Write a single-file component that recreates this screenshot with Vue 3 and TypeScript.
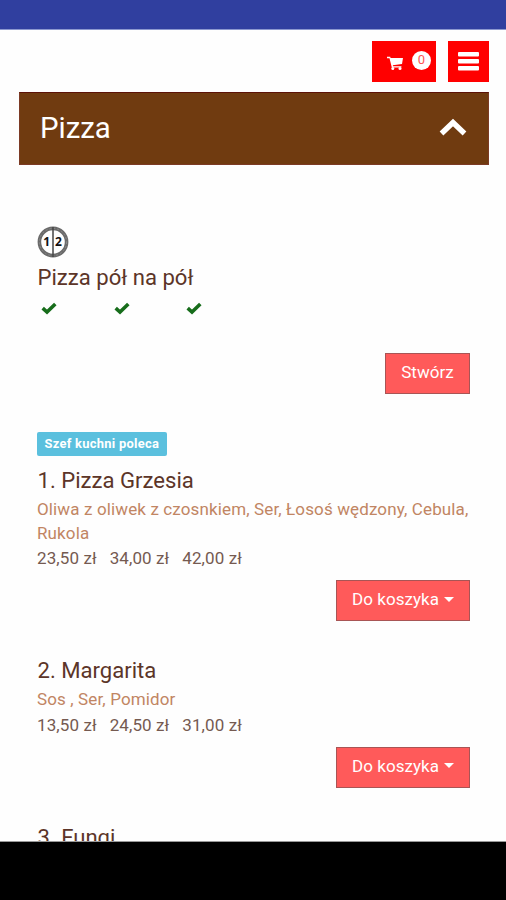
<script setup lang="ts">
interface Pizza {
  name: string
  badge?: string
  ingredients?: string
  prices?: string[]
}

const pizzas: Pizza[] = [
  {
    name: '1. Pizza Grzesia',
    badge: 'Szef kuchni poleca',
    ingredients: 'Oliwa z oliwek z czosnkiem, Ser, Łosoś wędzony, Cebula, Rukola',
    prices: ['23,50 zł', '34,00 zł', '42,00 zł'],
  },
  {
    name: '2. Margarita',
    ingredients: 'Sos , Ser, Pomidor',
    prices: ['13,50 zł', '24,50 zł', '31,00 zł'],
  },
  { name: '3. Fungi' },
]
</script>

<template>
  <div class="screen">
    <div class="status-bar"></div>
    <main class="content">
      <nav class="toolbar">
        <button class="tool cart" aria-label="Koszyk">
          <svg class="cart-icon" viewBox="0 0 16 14">
            <path d="M0 .8h3.2l.4 1.3H16l-1 6-9.2 1.2.3 1H14.4v1.3H4.8L2.5 2.2H0z" />
            <circle cx="5.8" cy="12.4" r="1.5" />
            <circle cx="13" cy="12.4" r="1.5" />
          </svg>
          <span class="count">0</span>
        </button>
        <button class="tool menu" aria-label="Menu">
          <svg viewBox="0 0 21 19" width="21" height="19">
            <rect width="21" height="4.6" rx="1" />
            <rect y="7" width="21" height="4.6" rx="1" />
            <rect y="14" width="21" height="4.6" rx="1" />
          </svg>
        </button>
      </nav>

      <header class="category">
        <h1>Pizza</h1>
        <svg viewBox="0 0 28 19" width="28" height="19">
          <path d="M2.5 15.5 14 4.5 25.5 15.5" />
        </svg>
      </header>

      <section class="item half">
        <svg class="half-icon" viewBox="0 0 32 32" width="32" height="32">
          <circle cx="16" cy="16" r="13.6" fill="none" stroke="#6a6a6a" stroke-width="3.6" />
          <circle cx="16" cy="16" r="13.6" fill="none" stroke="#8c8c8c" stroke-width="1" stroke-dasharray="2 2" />
          <path d="M16 1v30" stroke="#444" stroke-width="1.5" />
          <text x="6.3" y="20">1</text>
          <text x="18" y="20">2</text>
        </svg>
        <h2>Pizza pół na pół</h2>
        <div class="checks">
          <svg v-for="n in 3" :key="n" viewBox="0 0 16 13" width="16" height="13">
            <path d="M1.7 6.1 6 10 14.3 2" />
          </svg>
        </div>
        <button class="action create">Stwórz</button>
      </section>

      <section v-for="pizza in pizzas" :key="pizza.name" class="item">
        <span v-if="pizza.badge" class="badge">{{ pizza.badge }}</span>
        <h2>{{ pizza.name }}</h2>
        <template v-if="pizza.prices">
          <p class="ingredients">{{ pizza.ingredients }}</p>
          <div class="prices">
            <span v-for="price in pizza.prices" :key="price">{{ price }}</span>
          </div>
          <button class="action">Do koszyka<i class="caret"></i></button>
        </template>
      </section>
    </main>
    <div class="nav-bar"></div>
  </div>
</template>

<style>
body {
  margin: 0;
  background: #fff;
}
</style>

<style scoped>
.screen {
  display: flex;
  flex-direction: column;
  height: 900px;
  overflow: hidden;
  font-family: Roboto, "Liberation Sans", sans-serif;
  color: #5c3528;
}
.screen * {
  box-sizing: border-box;
}
.status-bar {
  flex: none;
  height: 30px;
  background: #303f9f;
  border-bottom: 1px solid #8c98cf;
}
.content {
  flex: none;
  height: 812px;
  overflow: hidden;
  background: #fefefe;
  border-bottom: 1px solid #999;
}
.nav-bar {
  flex: 1;
  background: #000;
}
.toolbar {
  display: flex;
  justify-content: flex-end;
  gap: 12px;
  padding: 11px 17px 0 0;
}
button {
  display: flex;
  align-items: center;
  margin: 0;
  border: 0;
  font-family: inherit;
  color: #fff;
}
.tool {
  height: 41px;
  padding: 0;
  background: #f00;
  fill: #fff;
}
.cart {
  width: 64px;
  padding: 0 5px 0 15px;
  justify-content: space-between;
}
.cart-icon {
  width: 16px;
  height: 14px;
  margin-top: 2px;
}
.count {
  width: 19px;
  height: 19px;
  margin-top: -2px;
  border-radius: 50%;
  background: #fff;
  color: #f55;
  font-size: 13px;
  line-height: 18px;
  text-align: center;
}
.menu {
  width: 41px;
  justify-content: center;
}
.category {
  display: flex;
  justify-content: space-between;
  align-items: center;
  height: 73px;
  margin: 10px 17px 0 19px;
  padding: 0 21px 2px 20px;
  border: 1px solid #7c3b25;
  border-top-color: #5c1208;
  background: #703b10;
  color: #fff;
}
h1 {
  margin: 0;
  font-size: 29.4px;
  font-weight: 400;
  line-height: 36px;
}
.category path {
  fill: none;
  stroke: #fff;
  stroke-width: 5.4;
}
.item {
  display: flex;
  flex-direction: column;
  align-items: flex-start;
  margin: 0 36px 35px 37px;
}
.half {
  margin-top: 61px;
  margin-bottom: 38px;
}
.half-icon text {
  font: 700 12px "Open Sans", sans-serif;
  fill: #111;
}
h2 {
  margin: 0;
  padding-left: 0.5px;
  font-size: 22.1px;
  font-weight: 400;
  line-height: 28px;
}
.half h2 {
  margin-top: 5px;
}
.checks {
  display: flex;
  gap: 56.5px;
  height: 13px;
  margin: 11px 0 0 4px;
}
.checks path {
  fill: none;
  stroke: #176d1b;
  stroke-width: 3.6;
}
.badge {
  height: 24px;
  margin-bottom: 10px;
  padding: 0 7.5px;
  border-radius: 2px;
  background: #5bc0de;
  color: #fff;
  font-size: 12.9px;
  font-weight: 700;
  letter-spacing: 0.28px;
  line-height: 23px;
}
.ingredients {
  margin: 4px 0 0;
  color: #c18563;
  font-size: 17px;
  letter-spacing: 0.13px;
  line-height: 23.5px;
}
.prices {
  display: flex;
  gap: 13px;
  margin-top: 1px;
  color: #755a51;
  font-size: 17px;
  letter-spacing: 0.1px;
  line-height: 24px;
}
.action {
  align-self: flex-end;
  justify-content: center;
  width: 134px;
  height: 41px;
  margin-top: 10px;
  padding: 0 0 3px;
  border: 1px solid #a85555;
  background: #ff5a5a;
  font-size: 17px;
  letter-spacing: 0.05px;
}
.create {
  width: 85px;
  margin-top: 38px;
}
.caret {
  margin-left: 5px;
  border: 5px solid transparent;
  border-top-color: #fff;
  border-bottom: 0;
}
</style>
